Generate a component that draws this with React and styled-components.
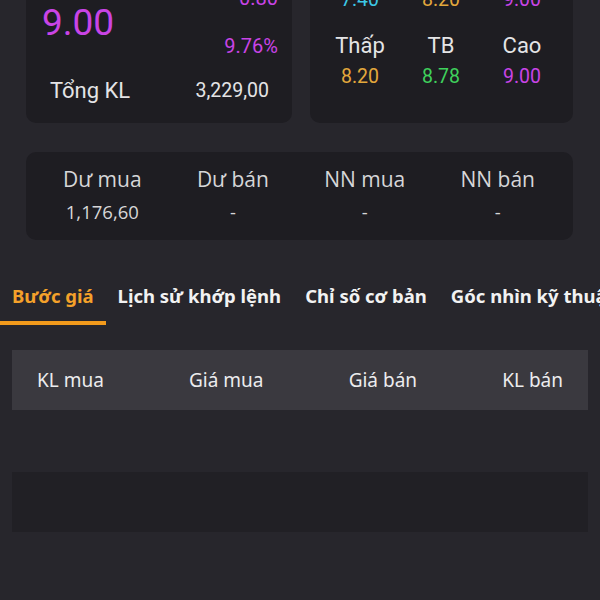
import React from "react";
import styled, { createGlobalStyle } from "styled-components";

const GlobalStyle = createGlobalStyle`
  html, body {
    margin: 0;
    padding: 0;
    background: #27262c;
    overflow: hidden;
  }
  * { box-sizing: border-box; }
`;

const COLORS = {
  ceil: "#c944e6",
  floor: "#3cc8e6",
  ref: "#e3a83c",
  up: "#3fd15c",
  text: "#e4e4e6",
};

const Page = styled.div`
  width: 600px;
  height: 600px;
  overflow: hidden;
  background: #27262c;
  font-family: Roboto, "Liberation Sans", sans-serif;
  color: ${COLORS.text};
`;

const TopGrid = styled.div`
  display: grid;
  grid-template-columns: 266px 263px;
  gap: 18px;
  padding: 0 27px 0 26px;
  margin-top: -60px;
`;

const Card = styled.div`
  background: #1e1d22;
  border-radius: 10px;
`;

const PriceCard = styled(Card)`
  display: flex;
  flex-direction: column;
  justify-content: flex-end;
  padding-bottom: 18px;
  height: 183px;
`;

const PriceRow = styled.div`
  display: flex;
  justify-content: space-between;
  align-items: center;
  padding: 0 14px 0 16px;
`;

const BigPrice = styled.div`
  font-size: 37px;
  line-height: 1;
  color: ${COLORS.ceil};
`;

const ChangeCol = styled.div`
  display: flex;
  flex-direction: column;
  align-items: flex-end;
  gap: 24px;
  font-size: 20px;
  line-height: 24px;
  color: ${COLORS.ceil};
`;

const StatRow = styled.div`
  display: flex;
  justify-content: space-between;
  align-items: center;
  margin-top: 19px;
  padding: 0 23px 0 24px;
  line-height: 28px;
`;

const StatLabel = styled.span`
  font-size: 22px;
`;

const StatValue = styled.span`
  font-size: 19.5px;
`;

const RangeCard = styled(Card)`
  display: flex;
  flex-direction: column;
  gap: 22px;
  padding: 17px 20px 0 19px;
`;

const RangeRow = styled.div`
  display: flex;
  justify-content: space-between;
`;

const RangeCell = styled.div`
  width: 62px;
  display: flex;
  flex-direction: column;
  align-items: center;
  gap: 7px;
  line-height: 24px;
`;

const Label = styled.div`
  font-size: 22px;
  line-height: 24px;
`;

const Value = styled.div`
  font-size: 19.5px;
  line-height: 24px;
  color: ${(p) => p.$color || COLORS.text};
`;

const VolumeCard = styled(Card)`
  margin: 29px 27px 0 26px;
  padding: 13px 38px 16px 37px;
  display: flex;
  justify-content: space-between;
`;

const VolumeCell = styled.div`
  display: flex;
  flex-direction: column;
  align-items: center;
  gap: 7px;
`;

const VolumeLabel = styled.div`
  font-family: "Open Sans", Roboto, sans-serif;
  font-size: 21px;
  line-height: 28px;
  color: #d6d6d8;
`;

const VolumeValue = styled.div`
  font-family: "Open Sans", Roboto, sans-serif;
  font-size: 18.5px;
  line-height: 24px;
  color: #d6d6d8;
`;

const Tabs = styled.div`
  display: flex;
  margin-top: 35px;
  white-space: nowrap;
`;

const Tab = styled.div`
  flex: none;
  padding: 8px 12px 12px;
  font-family: "Noto Sans", "Open Sans", sans-serif;
  font-weight: 700;
  font-size: 18.5px;
  line-height: 26px;
  color: ${(p) => (p.$active ? "#f4a12a" : "#f2f2f2")};
  border-bottom: 4px solid ${(p) => (p.$active ? "#f29a1c" : "transparent")};
`;

const Table = styled.div`
  padding: 0 12px;
  margin-top: 25px;
`;

const TableHead = styled.div`
  height: 60px;
  background: #3a393f;
  display: flex;
  align-items: center;
  justify-content: space-between;
  padding: 0 25px;
  font-family: "Noto Sans", "Open Sans", sans-serif;
  font-size: 19px;
  color: #ececee;
`;

const EmptyRow = styled.div`
  height: 62px;
`;

const Placeholder = styled.div`
  height: 60px;
  background: #212025;
`;

export default function App() {
  return (
    <Page>
      <GlobalStyle />
      <TopGrid>
        <PriceCard>
          <PriceRow>
            <BigPrice>9.00</BigPrice>
            <ChangeCol>
              <span>0.80</span>
              <span>9.76%</span>
            </ChangeCol>
          </PriceRow>
          <StatRow>
            <StatLabel>Tổng KL</StatLabel>
            <StatValue>3,229,00</StatValue>
          </StatRow>
        </PriceCard>
        <RangeCard>
          <RangeRow>
            <RangeCell>
              <Label>Sàn</Label>
              <Value $color={COLORS.floor}>7.40</Value>
            </RangeCell>
            <RangeCell>
              <Label>TC</Label>
              <Value $color={COLORS.ref}>8.20</Value>
            </RangeCell>
            <RangeCell>
              <Label>Trần</Label>
              <Value $color={COLORS.ceil}>9.00</Value>
            </RangeCell>
          </RangeRow>
          <RangeRow>
            <RangeCell>
              <Label>Thấp</Label>
              <Value $color={COLORS.ref}>8.20</Value>
            </RangeCell>
            <RangeCell>
              <Label>TB</Label>
              <Value $color={COLORS.up}>8.78</Value>
            </RangeCell>
            <RangeCell>
              <Label>Cao</Label>
              <Value $color={COLORS.ceil}>9.00</Value>
            </RangeCell>
          </RangeRow>
        </RangeCard>
      </TopGrid>

      <VolumeCard>
        <VolumeCell>
          <VolumeLabel>Dư mua</VolumeLabel>
          <VolumeValue>1,176,60</VolumeValue>
        </VolumeCell>
        <VolumeCell>
          <VolumeLabel>Dư bán</VolumeLabel>
          <VolumeValue>-</VolumeValue>
        </VolumeCell>
        <VolumeCell>
          <VolumeLabel>NN mua</VolumeLabel>
          <VolumeValue>-</VolumeValue>
        </VolumeCell>
        <VolumeCell>
          <VolumeLabel>NN bán</VolumeLabel>
          <VolumeValue>-</VolumeValue>
        </VolumeCell>
      </VolumeCard>

      <Tabs>
        <Tab $active>Bước giá</Tab>
        <Tab>Lịch sử khớp lệnh</Tab>
        <Tab>Chỉ số cơ bản</Tab>
        <Tab>Góc nhìn kỹ thuật</Tab>
      </Tabs>

      <Table>
        <TableHead>
          <span>KL mua</span>
          <span>Giá mua</span>
          <span>Giá bán</span>
          <span>KL bán</span>
        </TableHead>
        <EmptyRow />
        <Placeholder />
      </Table>
    </Page>
  );
}
